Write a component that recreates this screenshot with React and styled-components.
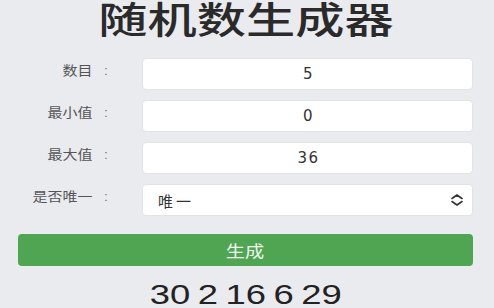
import React from "react";
import styled, { createGlobalStyle } from "styled-components";

const Global = createGlobalStyle`
  html, body { margin: 0; padding: 0; background: #eaebef; }
  body { font-family: "Noto Sans CJK SC", "Liberation Sans", sans-serif; }
  * { box-sizing: border-box; }
`;

const Page = styled.div`
  width: 494px;
  height: 308px;
  padding: 0 21px 0 18px;
  background: #eaebef;
  display: flex;
  flex-direction: column;
  overflow: hidden;
`;

const Title = styled.h1`
  margin: 0;
  height: 36px;
  line-height: 36px;
  font-size: 37px;
  font-weight: 500;
  color: #2a2a2a;
  text-align: center;
  font-family: "Noto Sans CJK SC", sans-serif;
`;

const Stretch = styled.span`
  display: inline-block;
  transform: scaleX(${(p) => p.$x || 1.3});
  transform-origin: ${(p) => p.$origin || "center"};
  white-space: pre;
`;

const Form = styled.div`
  margin-top: 22px;
  display: grid;
  grid-template-columns: 94px 1fr;
  column-gap: 30px;
  row-gap: 10px;
`;

const Label = styled.label`
  align-self: start;
  height: 32px;
  line-height: 24px;
  font-size: 13px;
  color: #555;
  text-align: right;
  font-family: "Noto Sans CJK SC", sans-serif;
`;

const Colon = styled.span`
  display: inline-block;
  margin: 0 4px 0 10px;
  font-family: "Liberation Sans", sans-serif;
  font-size: 12px;
  color: #777;
`;

const Field = styled.input`
  height: 32px;
  width: 100%;
  border: 1px solid #e2e3e7;
  border-radius: 4px;
  background: #fff;
  text-align: center;
  font-family: "DejaVu Sans", sans-serif;
  font-size: 15px;
  letter-spacing: 1.5px;
  color: #333;
  outline: none;
  padding: 0 0 0 2px;
`;

const SelectWrap = styled.div`
  position: relative;
  height: 32px;
`;

const Select = styled.select`
  appearance: none;
  -webkit-appearance: none;
  width: 100%;
  height: 32px;
  border: 1px solid #e2e3e7;
  border-radius: 4px;
  background: #fff;
  padding: 0 0 0 15px;
  font-size: 15px;
  letter-spacing: 3px;
  color: #333;
  font-family: "Noto Sans CJK SC", sans-serif;
  outline: none;
`;

const Arrow = styled.svg`
  position: absolute;
  right: 9px;
  top: 10px;
  width: 14px;
  height: 12px;
  pointer-events: none;
`;

const Button = styled.button`
  margin-top: 18px;
  height: 32px;
  width: 100%;
  border: none;
  border-radius: 4px;
  background: #50a552;
  color: #eef7ee;
  font-size: 16px;
  font-family: "Noto Sans CJK SC", sans-serif;
  padding: 0;
  line-height: 32px;
`;

const Result = styled.div`
  margin-top: 13px;
  height: 32px;
  line-height: 32px;
  text-align: center;
  font-family: "Liberation Sans", sans-serif;
  font-size: 28px;
  color: #222;
  word-spacing: -2px;
`;

const fields = [
  { label: "数目", value: "5" },
  { label: "最小值", value: "0" },
  { label: "最大值", value: "36" },
];

export default function App() {
  return (
    <Page>
      <Global />
      <Title>
        <Stretch $x={1.33}>随机数生成器</Stretch>
      </Title>
      <Form>
        {fields.map((f) => (
          <React.Fragment key={f.label}>
            <Label>
              <Stretch $x={1.15} $origin="right">
                {f.label}
                <Colon>:</Colon>
              </Stretch>
            </Label>
            <Field defaultValue={f.value} />
          </React.Fragment>
        ))}
        <Label>
          <Stretch $x={1.15} $origin="right">
            是否唯一
            <Colon>:</Colon>
          </Stretch>
        </Label>
        <SelectWrap>
          <Select defaultValue="unique">
            <option value="unique">唯一</option>
            <option value="repeat">可重复</option>
          </Select>
          <Arrow viewBox="0 0 14 12" fill="none" stroke="#333" strokeWidth="1.6" strokeLinecap="round" strokeLinejoin="round">
            <path d="M2 4.5 L7 1 L12 4.5" />
            <path d="M2 7.5 L7 11 L12 7.5" />
          </Arrow>
        </SelectWrap>
      </Form>
      <Button>
        <Stretch $x={1.2}>生成</Stretch>
      </Button>
      <Result>
        <Stretch $x={1.3}>30 2 16 6 29</Stretch>
      </Result>
    </Page>
  );
}
